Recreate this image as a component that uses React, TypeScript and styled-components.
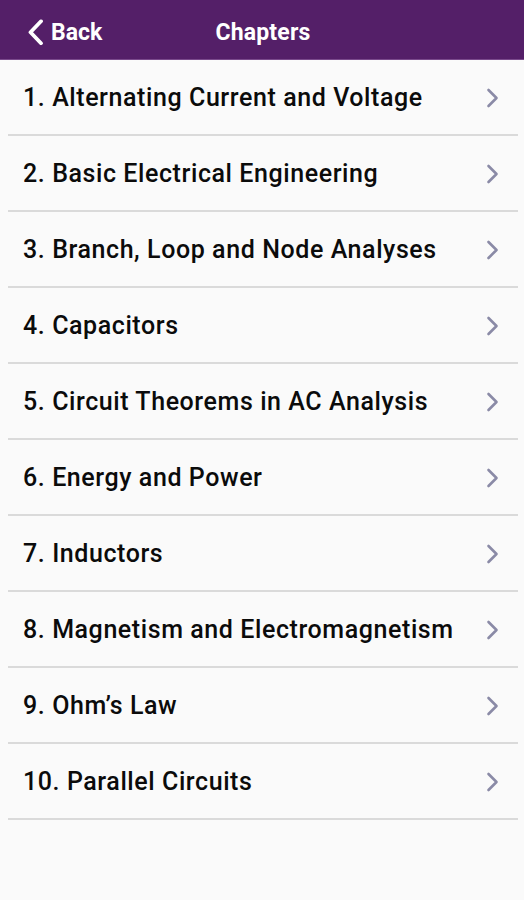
import React from 'react';
import styled, { createGlobalStyle } from 'styled-components';

const GlobalStyle = createGlobalStyle`
  html, body {
    margin: 0;
    padding: 0;
    background: #fafafa;
  }
  body {
    font-family: Roboto, 'Liberation Sans', sans-serif;
  }
`;

const chapters = [
  'Alternating Current and Voltage',
  'Basic Electrical Engineering',
  'Branch, Loop and Node Analyses',
  'Capacitors',
  'Circuit Theorems in AC Analysis',
  'Energy and Power',
  'Inductors',
  'Magnetism and Electromagnetism',
  'Ohm\u2019s Law',
  'Parallel Circuits',
];

const Screen = styled.div`
  width: 524px;
  min-height: 900px;
  background: #fafafa;
`;

const Header = styled.header`
  position: relative;
  height: 60px;
  box-sizing: border-box;
  padding-top: 5px;
  background: #541f68;
  border-bottom: 1px solid #7a4a8c;
  display: flex;
  align-items: center;
  justify-content: center;
`;

const BackButton = styled.button`
  position: absolute;
  left: 27px;
  top: 50%;
  transform: translateY(-40%);
  display: flex;
  align-items: center;
  gap: 7px;
  padding: 0;
  border: 0;
  background: none;
  color: #fff;
  font-family: Roboto, 'Liberation Sans', sans-serif;
  font-size: 23px;
  font-weight: 700;
  cursor: pointer;
`;

const Title = styled.h1`
  margin: 0 0 0 2px;
  color: #fff;
  font-size: 23px;
  font-weight: 700;
  letter-spacing: 0.2px;
`;

const List = styled.ul`
  list-style: none;
  margin: 0;
  padding: 0;
`;

const Row = styled.li`
  box-sizing: border-box;
  height: 76px;
  margin: 0 6px 0 8px;
  padding: 1px 19px 0 15px;
  display: flex;
  align-items: center;
  justify-content: space-between;
  border-bottom: 2px solid #dadada;
`;

const Label = styled.span`
  font-size: 25px;
  font-weight: 500;
  color: #0b0b0b;
  letter-spacing: 0.58px;
`;

const Chevron = ({ color }: { color: string }) => (
  <svg width="13" height="20" viewBox="0 0 13 20" fill="none">
    <path d="M2.5 2 L10.5 10 L2.5 18" stroke={color} strokeWidth="2.6" strokeLinecap="round" strokeLinejoin="round" />
  </svg>
);

const BackChevron = () => (
  <svg width="17" height="26" viewBox="0 0 17 26" fill="none">
    <path d="M14 2 L3.5 13 L14 24" stroke="#fff" strokeWidth="3.8" strokeLinecap="round" strokeLinejoin="round" />
  </svg>
);

export default function App() {
  return (
    <>
      <GlobalStyle />
      <Screen>
        <Header>
          <BackButton>
            <BackChevron />
            Back
          </BackButton>
          <Title>Chapters</Title>
        </Header>
        <List>
          {chapters.map((name, i) => (
            <Row key={name}>
              <Label>
                {i + 1}. {name}
              </Label>
              <Chevron color="#8a8aa6" />
            </Row>
          ))}
        </List>
      </Screen>
    </>
  );
}
